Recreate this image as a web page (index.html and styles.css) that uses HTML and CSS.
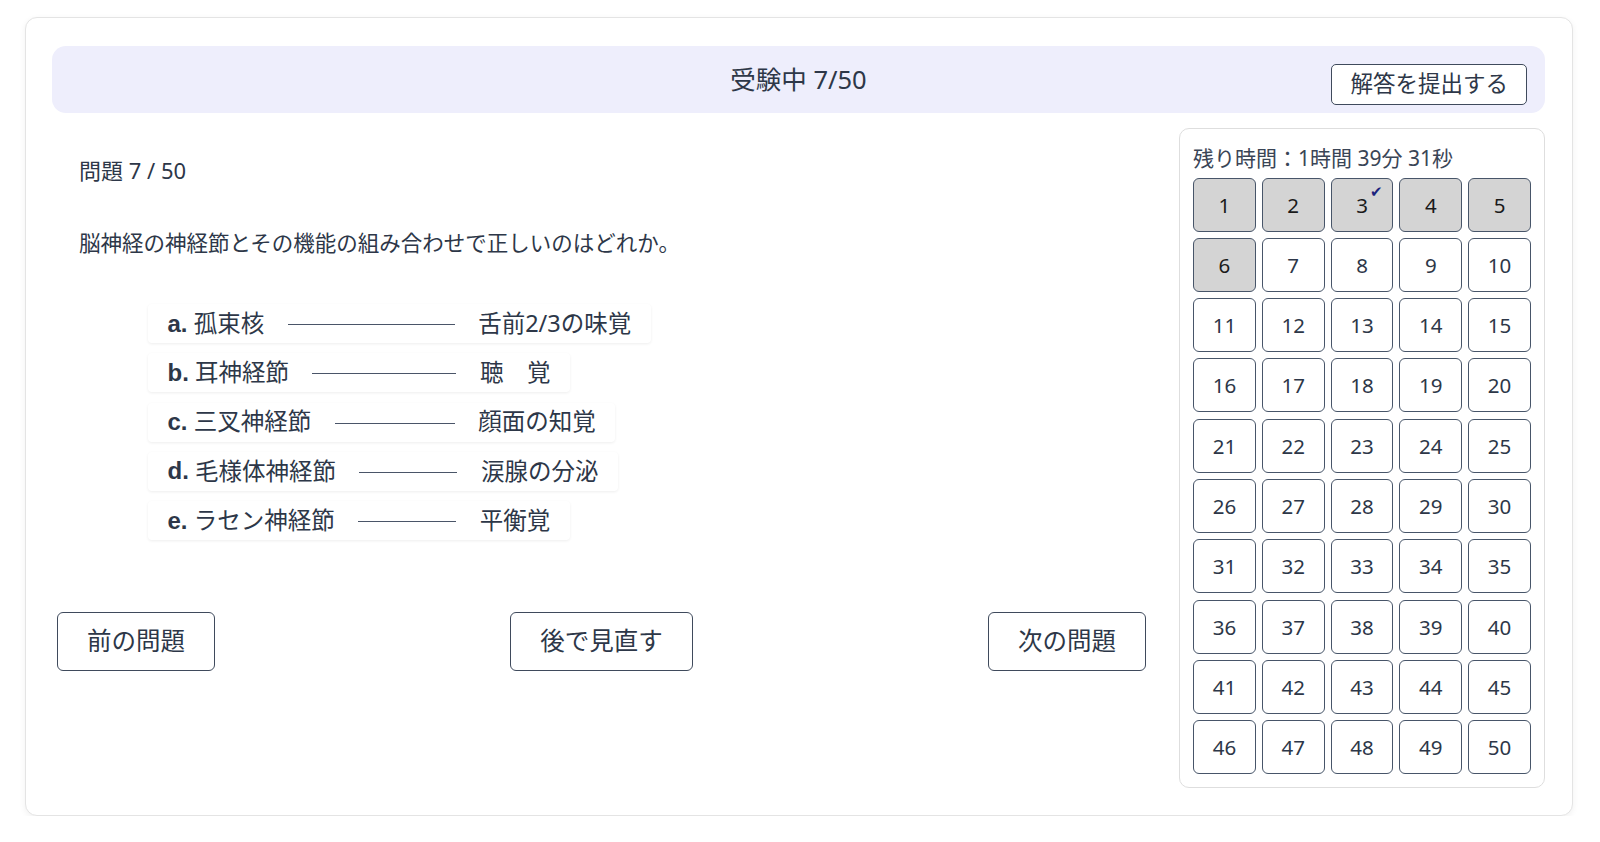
FILE: index.html
```html
<!DOCTYPE html>
<html lang="ja">
<head>
  <meta charset="UTF-8" />
  <title>受験中 7/50</title>
  <link rel="stylesheet" href="styles.css">
</head>
<body>
  <div class="exam-card">
    <div class="exam-header">
      <span></span>
      <h1 class="exam-title">受験中 7/50</h1>
      <button class="btn-submit">解答を提出する</button>
    </div>

    <div class="exam-body">
      <div class="question-col">
        <div class="question">
          <p class="question-no">問題 7 / 50</p>
          <p class="question-text">脳神経の神経節とその機能の組み合わせで正しいのはどれか。</p>

          <ul class="options">
            <li class="option"><b>a.</b>&nbsp;孤束核　<span class="dash dash-7"></span>　舌前2/3の味覚</li>
            <li class="option"><b>b.</b>&nbsp;耳神経節　<span class="dash dash-6"></span>　聴　覚</li>
            <li class="option"><b>c.</b>&nbsp;三叉神経節　<span class="dash dash-5"></span>　顔面の知覚</li>
            <li class="option"><b>d.</b>&nbsp;毛様体神経節　<span class="dash dash-4"></span>　涙腺の分泌</li>
            <li class="option"><b>e.</b>&nbsp;ラセン神経節　<span class="dash dash-4"></span>　平衡覚</li>
          </ul>
        </div>

        <div class="nav-buttons">
          <button class="btn-nav">前の問題</button>
          <button class="btn-nav">後で見直す</button>
          <button class="btn-nav">次の問題</button>
        </div>
      </div>

      <div class="side-panel">
        <p class="timer">残り時間：1時間 39分 31秒</p>
        <div class="question-grid" id="grid"></div>
      </div>
    </div>
  </div>

  <script>
    // 問題番号ボタンを生成
    const grid = document.getElementById('grid');
    const answered = [1, 2, 3, 4, 5, 6];
    const flagged = [3];
    for (let i = 1; i <= 50; i++) {
      const cell = document.createElement('button');
      cell.className = 'q-cell';
      if (answered.includes(i)) cell.classList.add('done');
      cell.textContent = i;
      if (flagged.includes(i)) {
        const mark = document.createElement('span');
        mark.className = 'flag';
        mark.textContent = '✔';
        cell.appendChild(mark);
      }
      grid.appendChild(cell);
    }
  </script>
</body>
</html>
```

FILE: styles.css
```css
* {
  box-sizing: border-box;
}

body {
  margin: 0;
  padding: 17px 0 0 25px;
  background: #fff;
  font-family: "Noto Sans", "Noto Sans CJK JP", sans-serif;
  color: #2d3748;
}

.exam-card {
  width: 1548px;
  height: 799px;
  padding: 28px 27px 26px 26px;
  border: 1px solid #e4e4e4;
  border-radius: 12px;
  box-shadow: 0 2px 6px rgba(0,0,0,0.06);
  background: white;
}

.exam-header {
  height: 67px;
  background: #eeeefc;
  border-radius: 14px;
  display: grid;
  grid-template-columns: 1fr auto 1fr;
  align-items: center;
  padding: 0 18px;
}

.exam-title {
  margin: 0;
  font-size: 25.5px;
  font-weight: 400;
  line-height: 1;
  color: #2d3748;
}

.btn-submit {
  justify-self: end;
  margin-top: 10px;
  height: 41px;
  padding: 0 18px;
  background: white;
  border: 1.5px solid #3f4a5c;
  border-radius: 5px;
  font-family: inherit;
  font-size: 22.5px;
  line-height: 1;
  color: #2d3748;
}

.exam-body {
  display: flex;
  margin-top: 15px;
}

.question-col {
  width: 1094px;
  padding-left: 5px;
}

.question {
  padding-left: 22px;
}

.question-no {
  margin: 28px 0 0;
  font-size: 22px;
  line-height: 28px;
}

.question-text {
  margin: 45px 0 0;
  font-size: 21.5px;
  line-height: 28px;
}

.options {
  list-style: none;
  margin: 47px 0 0 69px;
  padding: 0;
  display: flex;
  flex-direction: column;
  align-items: flex-start;
  gap: 10.25px;
}

.option {
  height: 39px;
  display: flex;
  align-items: center;
  padding: 0 19.5px;
  background: white;
  border-radius: 4px;
  box-shadow: 0 1px 3px rgba(0,0,0,0.07);
  font-size: 23.5px;
  line-height: 1;
  color: #2d3748;
  white-space: pre;
}

.option b {
  font-family: "Liberation Sans", sans-serif;
  font-weight: 700;
  font-size: 24px;
  color: #2d3748;
}

.option .dash {
  display: inline-block;
  height: 1px;
  margin-top: 2px;
  background: #4a5568;
}

.dash-7 { width: 167px; }
.dash-6 { width: 144px; }
.dash-5 { width: 120px; }
.dash-4 { width: 98px; }

.nav-buttons {
  display: flex;
  justify-content: space-between;
  margin-top: 72px;
}

.btn-nav {
  height: 59px;
  padding: 0 29px;
  background: white;
  border: 1.5px solid #3f4a5c;
  border-radius: 6px;
  font-family: inherit;
  font-size: 24.5px;
  line-height: 1;
  color: #2d3748;
}

.side-panel {
  width: 366px;
  margin-left: 33px;
  padding: 15px 13px 13px;
  border: 1px solid #dedede;
  border-radius: 10px;
}

.timer {
  margin: 0 0 5.5px;
  font-size: 21px;
  line-height: 28px;
  color: #3a4556;
}

.question-grid {
  display: grid;
  grid-template-columns: repeat(5, 1fr);
  grid-auto-rows: 54px;
  gap: 6.3px 6px;
}

.q-cell {
  position: relative;
  background: white;
  border: 1.5px solid #475569;
  border-radius: 6px;
  font-family: inherit;
  font-size: 20.5px;
  color: #2d3748;
  padding: 0;
}

.q-cell.done {
  background: #d4d4d4;
  color: #1a1a1a;
}

.q-cell .flag {
  position: absolute;
  top: 5px;
  right: 9px;
  font-size: 14.5px;
  line-height: 1;
  color: #1a237e;
}
```
